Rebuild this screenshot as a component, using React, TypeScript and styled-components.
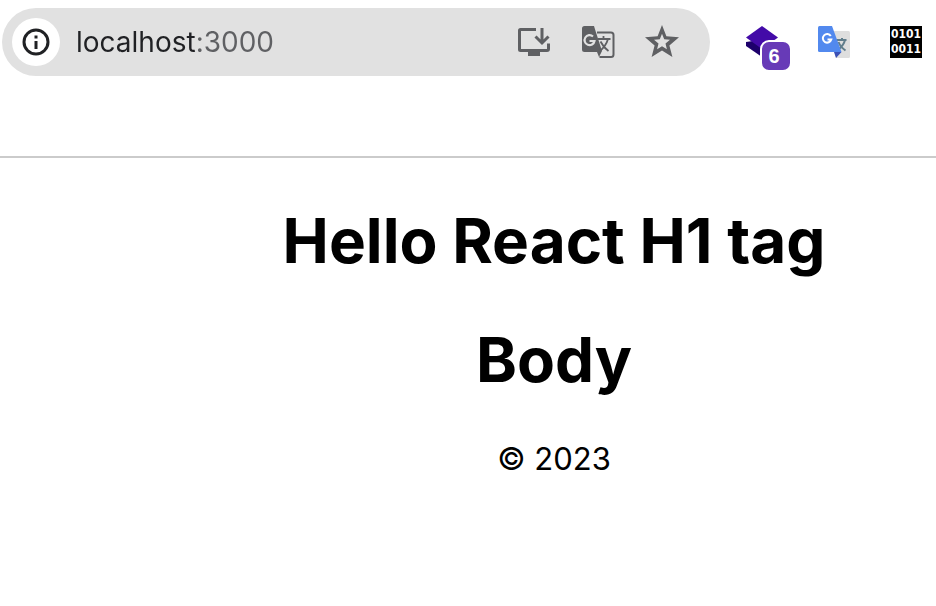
import React from "react";
import styled, { createGlobalStyle } from "styled-components";

const GlobalStyle = createGlobalStyle`
  *, *::before, *::after { box-sizing: border-box; }
  body {
    margin: 0;
    background: #fff;
    color: #000;
    font-family: Inter, "Liberation Sans", sans-serif;
  }
`;

const Toolbar = styled.header`
  display: flex;
  align-items: center;
  gap: 34px;
  padding: 8px 12px 80px 2px;
  border-bottom: 2px solid #cbcbcb;
`;

const AddressBar = styled.form`
  display: flex;
  flex: 1;
  min-width: 0;
  align-items: center;
  gap: 16px;
  height: 68px;
  padding: 0 30px 0 10px;
  border-radius: 34px;
  background: #e1e1e1;
`;

const IconButton = styled.button<{ $size: number; $round?: boolean }>`
  position: relative;
  display: flex;
  flex: none;
  align-items: center;
  justify-content: center;
  width: ${(p) => p.$size}px;
  height: ${(p) => p.$size}px;
  padding: 0;
  border: 0;
  border-radius: ${(p) => (p.$round ? "50%" : "0")};
  background: ${(p) => (p.$round ? "#fff" : "transparent")};
  color: ${(p) => (p.$round ? "#202124" : "#5f6063")};
  cursor: pointer;

  svg {
    display: block;
    flex: none;
  }
`;

const UrlInput = styled.input`
  flex: 1;
  min-width: 0;
  height: 40px;
  padding: 0;
  border: 0;
  outline: 0;
  background: linear-gradient(to right, #202124 120px, #5f6063 120px);
  background-clip: text;
  -webkit-background-clip: text;
  color: transparent;
  caret-color: #202124;
  font: 400 28px/40px Inter, "Liberation Sans", sans-serif;
`;

const PageActions = styled.div`
  display: flex;
  gap: 28px;
`;

const Extensions = styled.nav`
  display: flex;
  gap: 36px;
`;

const Badge = styled.span`
  position: absolute;
  top: 16px;
  left: 16px;
  width: 32px;
  height: 32px;
  padding-right: 4px;
  border: 2px solid #fff;
  border-radius: 9px;
  background: #673ab7;
  color: #fff;
  font: 700 20px/28px "Liberation Sans", Arial, sans-serif;
  text-align: center;
`;

const BinaryIcon = styled.span`
  display: flex;
  flex-direction: column;
  align-items: center;
  width: 32px;
  height: 32px;
  padding-top: 1px;
  background: #000;
  color: #fff;
  font: 700 12px/15px "DejaVu Sans Condensed", "DejaVu Sans", sans-serif;
`;

const Content = styled.main`
  display: flex;
  flex-direction: column;
  align-items: center;
  padding: 44px 0 40px 172px;
`;

const Heading = styled.h1`
  margin: 0 0 42px;
  font-size: 62px;
  font-weight: 700;
  line-height: 77px;
`;

const Footer = styled.footer`
  font-size: 31px;
  line-height: 38px;
`;

const InfoIcon = () => (
  <svg width="28" height="28" viewBox="0 0 28 28" fill="none" stroke="currentColor">
    <circle cx="14" cy="14" r="12" strokeWidth="3" />
    <path d="M14 13v8" strokeWidth="3" />
    <path d="M14 7.5v3" strokeWidth="3" />
  </svg>
);

const InstallIcon = () => (
  <svg width="36" height="36" viewBox="0 0 36 36" fill="none" stroke="currentColor" strokeWidth="3">
    <path d="M20 5.500H4.500Q3.500 5.500 3.500 6.500V25.500Q3.500 26.500 4.500 26.500H31Q32.500 26.500 32.500 25V19.500" />
    <path d="M12 27h12v5H12z" fill="currentColor" stroke="none" />
    <path d="M26 4v14M19.500 12.500l6.500 6.500 6.500-6.500" />
  </svg>
);

const TranslateIcon = () => (
  <svg width="36" height="36" viewBox="0 0 36 36">
    <path d="M17 8.500h14q2.500 0 2.500 2.500v19.500q0 2.500-2.500 2.500H19.500" fill="none" stroke="currentColor" strokeWidth="2" />
    <path d="M4.500 2H14l1.700 5.500L22 27l-3 6-2-5H4.500Q2 28 2 25.500v-21Q2 2 4.500 2Z" fill="currentColor" />
    <path d="M13 12.500A5 5 0 1 0 14.500 17h-5" fill="none" stroke="#e1e1e1" strokeWidth="2.200" />
    <path d="M18 15h12.500M23.500 12v3M28 15c-1.500 5.500-4.500 9-8.500 12.500M20.500 17.500c2 4 4.500 7 8 9.500" fill="none" stroke="currentColor" strokeWidth="1.800" />
  </svg>
);

const StarIcon = () => (
  <svg width="36" height="36" viewBox="0 0 36 36">
    <path
      fill="currentColor"
      fillRule="evenodd"
      d="M18 1l4.400 11.200 12.600 1.100-9.600 8.200L28.400 33 18 26.500 7.600 33l3-11.500L1 13.300l12.600-1.100ZM18 9.800l-2.200 5.400-5.800.5 4.500 3.800-1.400 5.700 4.900-3 4.900 3-1.400-5.700 4.500-3.800-5.800-.5Z"
    />
  </svg>
);

const LayersIcon = () => (
  <svg width="32" height="32" viewBox="0 0 32 32">
    <path d="M0 20v-4l7-1h18l7 5L16 31Z" fill="#1d006b" />
    <path d="M16 0l16 11.500L16 23 0 11.500Z" fill="#430aa8" />
  </svg>
);

const GoogleTranslateIcon = () => (
  <svg width="32" height="32" viewBox="0 0 32 32">
    <path d="M12 5h18.500Q32 5 32 6.500v24q0 1.500-1.500 1.500H18Z" fill="#dedede" />
    <path d="M18.500 14h10M24 12v2M27 14c-1 4-3.500 7-6 9M20.500 16c1.500 4 4 6.500 7 8.500" fill="none" stroke="#607d8b" strokeWidth="2" />
    <path d="M16 26h7.500L18 32Z" fill="#3b50b5" />
    <path d="M1.500 0H14l9.500 26h-22Q0 26 0 24.500v-23Q0 0 1.500 0Z" fill="#5289ee" />
    <path d="M12.800 10A4.300 4.300 0 1 0 13.300 13.500H9.500" fill="none" stroke="#fff" strokeWidth="2" />
  </svg>
);

export default function App() {
  return (
    <>
      <GlobalStyle />
      <Toolbar>
        <AddressBar onSubmit={(e: React.FormEvent) => e.preventDefault()}>
          <IconButton type="button" $size={48} $round aria-label="View site information">
            <InfoIcon />
          </IconButton>
          <UrlInput type="text" aria-label="Address" defaultValue="localhost:3000" />
          <PageActions>
            <IconButton type="button" $size={36} aria-label="Install app"><InstallIcon /></IconButton>
            <IconButton type="button" $size={36} aria-label="Translate this page"><TranslateIcon /></IconButton>
            <IconButton type="button" $size={36} aria-label="Bookmark this tab"><StarIcon /></IconButton>
          </PageActions>
        </AddressBar>
        <Extensions aria-label="Extensions">
          <IconButton type="button" $size={36} aria-label="Layers, 6 items">
            <LayersIcon />
            <Badge>6</Badge>
          </IconButton>
          <IconButton type="button" $size={36} aria-label="Google Translate"><GoogleTranslateIcon /></IconButton>
          <IconButton type="button" $size={36} aria-label="Binary">
            <BinaryIcon><span>0101</span><span>0011</span></BinaryIcon>
          </IconButton>
        </Extensions>
      </Toolbar>
      <Content>
        <Heading>Hello React H1 tag</Heading>
        <Heading>Body</Heading>
        <Footer>© 2023</Footer>
      </Content>
    </>
  );
}
